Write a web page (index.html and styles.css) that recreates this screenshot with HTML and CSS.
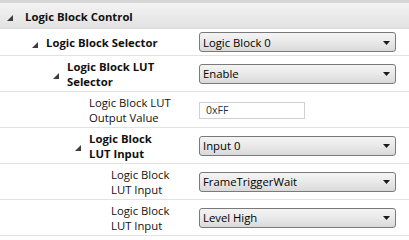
FILE: index.html
```html
<!DOCTYPE html>
<html>
<head>
<meta charset="utf-8">
<link rel="stylesheet" href="styles.css">
</head>
<body>
<div class="grid">
  <div class="header">
    <svg class="tri" width="6" height="6" viewBox="0 0 6 6"><polygon points="6,0 6,6 0,6"/></svg>
    <span class="hlabel">Logic Block Control</span>
  </div>

  <div class="row r1">
    <div class="name lvl1"><svg class="tri" width="6" height="6" viewBox="0 0 6 6"><polygon points="6,0 6,6 0,6"/></svg><span class="label bold">Logic Block Selector</span></div>
    <div class="value"><div class="combo"><span>Logic Block 0</span><svg class="arrow" width="7" height="4" viewBox="0 0 7 4"><polygon points="0,0 7,0 3.5,4"/></svg></div></div>
  </div>

  <div class="row">
    <div class="name lvl2"><svg class="tri" width="6" height="6" viewBox="0 0 6 6"><polygon points="6,0 6,6 0,6"/></svg><span class="label bold">Logic Block LUT<br>Selector</span></div>
    <div class="value"><div class="combo"><span>Enable</span><svg class="arrow" width="7" height="4" viewBox="0 0 7 4"><polygon points="0,0 7,0 3.5,4"/></svg></div></div>
  </div>

  <div class="row">
    <div class="name lvl3"><span class="tri-space"></span><span class="label">Logic Block LUT<br>Output Value</span></div>
    <div class="value"><div class="textbox">0xFF</div></div>
  </div>

  <div class="row">
    <div class="name lvl3"><svg class="tri" width="6" height="6" viewBox="0 0 6 6"><polygon points="6,0 6,6 0,6"/></svg><span class="label bold">Logic Block<br>LUT Input</span></div>
    <div class="value"><div class="combo"><span>Input 0</span><svg class="arrow" width="7" height="4" viewBox="0 0 7 4"><polygon points="0,0 7,0 3.5,4"/></svg></div></div>
  </div>

  <div class="row">
    <div class="name lvl4"><span class="tri-space"></span><span class="label">Logic Block<br>LUT Input</span></div>
    <div class="value"><div class="combo"><span>FrameTriggerWait</span><svg class="arrow" width="7" height="4" viewBox="0 0 7 4"><polygon points="0,0 7,0 3.5,4"/></svg></div></div>
  </div>

  <div class="row">
    <div class="name lvl4"><span class="tri-space"></span><span class="label">Logic Block<br>LUT Input</span></div>
    <div class="value"><div class="combo"><span>Level High</span><svg class="arrow" width="7" height="4" viewBox="0 0 7 4"><polygon points="0,0 7,0 3.5,4"/></svg></div></div>
  </div>
</div>
</body>
</html>
```

FILE: styles.css
```css
html, body {
  margin: 0;
  padding: 0;
  background: #ffffff;
}
body {
  font-family: "Open Sans", "Noto Sans", "DejaVu Sans", sans-serif;
  font-size: 11px;
  color: #111;
  width: 409px;
  height: 240px;
  overflow: hidden;
}
.grid {
  display: flex;
  flex-direction: column;
  border-top: 3px solid #d6d6d6;
}
.header {
  height: 25px;
  display: flex;
  align-items: center;
  padding-left: 7px;
  background: linear-gradient(#f3f3f3, #e2e2e2);
  border-bottom: 1px solid #d9d9d9;
}
.header .tri {
  margin-top: 5px;
  margin-right: 12px;
}
.hlabel {
  font-weight: bold;
  font-size: 11.3px;
  color: #111;
  margin-top: 2px;
}
.tri {
  fill: #3d3d3d;
  flex: none;
}
.tri-space {
  width: 6px;
  flex: none;
}
.row {
  display: flex;
  height: 35px;
  border-bottom: 1px solid #e2e2e2;
}
.row.r1 {
  height: 26px;
}
.name {
  width: 195px;
  flex: none;
  display: flex;
  align-items: center;
  box-sizing: border-box;
}
.name .tri {
  margin-right: 8px;
  margin-top: 5px;
}
.name .tri-space {
  margin-right: 8px;
}
.lvl1 { padding-left: 32px; }
.lvl2 { padding-left: 53px; }
.lvl3 { padding-left: 75px; }
.lvl4 { padding-left: 97px; }
.label {
  line-height: 15px;
  font-size: 11.3px;
  color: #111;
  margin-top: 1px;
}
.bold {
  font-weight: bold;
}
.value {
  flex: 1;
  display: flex;
  align-items: center;
  padding-left: 4px;
  padding-right: 13px;
}
.combo {
  flex: 1;
  height: 18px;
  border: 1px solid #7a7a7a;
  border-radius: 3px;
  background: linear-gradient(#f4f4f4, #e9e9e9 50%, #d9d9d9);
  display: flex;
  align-items: center;
  justify-content: space-between;
  padding: 0 5px 0 3px;
  font-size: 11.3px;
  color: #000;
}
.arrow {
  fill: #1a1a1a;
  margin-top: 1px;
}
.textbox {
  width: 98px;
  height: 15px;
  margin-top: 2px;
  border: 1px solid #d2d2d2;
  padding-left: 6px;
  font-size: 10.5px;
  line-height: 15px;
  color: #1f2f44;
}
```
